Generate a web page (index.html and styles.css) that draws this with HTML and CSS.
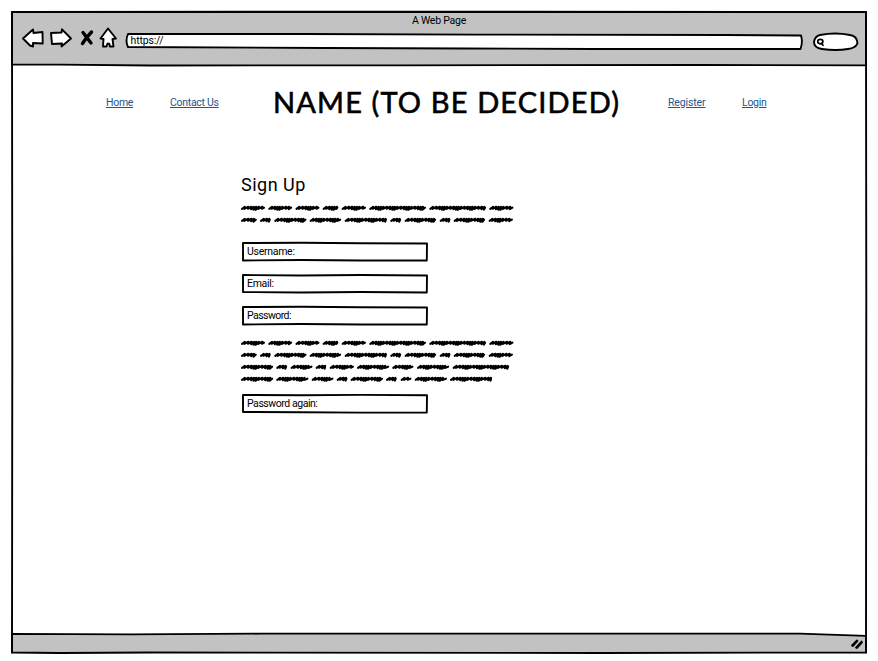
FILE: index.html
```html
<!DOCTYPE html>
<html lang="en">
<head>
<meta charset="utf-8">
<title>A Web Page</title>
<link rel="stylesheet" href="styles.css">
</head>
<body>
<div class="window">
  <svg class="outline" viewBox="0 0 878 661" aria-hidden="true">
    <path class="bar" d="M12 12H866V65.300L700 65L400 65.300L150 65.500L60 64.600L12 64.500Z"/>
    <path class="bar" d="M12 633.800L130 634.300L260 633.700H800L866 635.800V652.500L600 653L150 652.500L60 653L12 652.500Z"/>
    <path class="edge" d="M12 12L300 11.600L866 12L866.300 300L866 652.500M12 12L12.300 350L12 652.500"/>
  </svg>
  <header class="chrome">
    <div class="page-title"><span class="t-title">A Web Page</span></div>
    <div class="toolbar">
      <svg class="nav-icons" viewBox="0 0 100 28" aria-hidden="true">
        <path class="shape" d="M1 13.500L11 4.500L11.500 8L20.500 7L20.700 18.500L11 18L11 21.500L8 20.500Z"/>
        <path class="shape" d="M29 8L39.500 7.500L40 4.300L49 13.500L39.500 21.500L40 18.500L30 19Z"/>
        <path class="cross" d="M61 7.500L69 18M69.500 7L65 12L60.500 18.500"/>
        <path class="shape" d="M86 3.500L94 13.500L90.500 14L91.500 21.500H87.800L87.500 19L85.500 18.500L84.500 21.500L81 21.500L81.500 14L78.500 13.500Z"/>
      </svg>
      <div class="address">
        <svg class="backdrop" viewBox="0 0 678 18" aria-hidden="true"><path class="shape" d="M3 2L180 2L350 2.600L600 3L676 3.500Q678 10 675.500 17L470 17L340 16.500L200 16L3 15Q0 9 3 2Z"/></svg>
        <span class="t-url">https://</span>
      </div>
      <svg class="search" viewBox="0 0 46 20" aria-hidden="true"><path class="shape" d="M7 3Q22 0 37 3Q44 4 44.500 11Q43 16 35 17Q23 19 9 17Q1 16 1 10Q2 4 7 3Z"/><ellipse class="lens" cx="7.300" cy="9.600" rx="2.600" ry="2.200"/><path class="lens" d="M8.500 11.500L10 13.300"/></svg>
    </div>
  </header>
  <main class="content">
    <nav class="site-nav">
      <a class="home">Home</a>
      <a class="contact">Contact Us</a>
      <h1><span>NAME (TO BE DECIDED)</span></h1>
      <a class="register">Register</a>
      <a class="login">Login</a>
    </nav>
    <section class="signup">
      <h2>Sign Up</h2>
      <svg class="scribble" data-lines="2" width="276" height="24"></svg>
      <div class="fields">
        <div class="field"><svg class="backdrop" viewBox="0 0 188 21"><path class="box" d="M2 2L60 1.700L120 2.300L186 2.500L185.800 19.500L120 19.500L60 19L2 19.500Z"/></svg><span class="user">Username:</span></div>
        <div class="field"><svg class="backdrop" viewBox="0 0 188 21"><path class="box" d="M2 2L60 2.500L120 2L186 2.500L185.800 19.500L120 19L60 19.500L2 19Z"/></svg><span class="email">Email:</span></div>
        <div class="field"><svg class="backdrop" viewBox="0 0 188 21"><path class="box" d="M2 2L60 1.700L120 2.300L186 2.500L185.800 19.500L120 19.500L60 19L2 19.500Z"/></svg><span class="pass">Password:</span></div>
      </div>
      <svg class="scribble" data-lines="4" width="276" height="48"></svg>
      <div class="field again"><svg class="backdrop" viewBox="0 0 188 21"><path class="box" d="M2 2L60 2.200L120 1.900L186 2.200L185.800 19.500L120 19.600L60 19.300L2 19Z"/></svg><span class="repeat">Password again:</span></div>
    </section>
  </main>
  <footer class="status">
    <svg class="grip" viewBox="0 0 14 12" aria-hidden="true"><path d="M2 7.500L7 2.500M3 8L7.500 3M6 9.500L11.500 3.500M7 10L12 4.500"/></svg>
  </footer>
</div>
<script src="scribble.js"></script>
</body>
</html>
```
FILE: scribble.js
```js
// Placeholder prose: each pair is the start and end of one scribbled word.
const lines = [
  [[0,23.5],[27.3,50.7],[54.5,78],[81.7,97],[100.7,124.5],[128.3,184.5],[188.3,244.7],[248.3,272]],
  [[0,15.3],[19,29.3],[33.3,65],[68.7,99.7],[103.7,145.5],[149.3,159.7],[163.7,194.7],[198.7,209],[212.7,243.7],[247.7,271.5]],
  [[0,31.7],[35.3,45.7],[49.7,71],[74.7,84.7],[88.7,112.5],[116,147.7],[151.3,172],[176,207.7],[211.7,267.7]],
  [[0,31.7],[35.3,67],[70.7,92],[95.7,106],[109.7,141.5],[145,155.3],[159.7,170],[173.7,205.5],[209,250.7]]
];
document.querySelectorAll('.scribble').forEach(svg => {
  lines.slice(0, +svg.dataset.lines).forEach((words, row) => {
    const y = 5 + row * 12;
    let d = '';
    words.forEach(([a, b], w) => {
      d += `M${a + 1} ${y + 0.8}`;
      let x = a + 1, i = 0;
      while (x + 3.2 < b) {
        const low = [0.9, 0.7, 1.2, 1.7, 1.8][(i + w % 2) % 5];
        d += `L${x + 2.8} ${y - 1.2}L${x + 2.3} ${y + low}`;
        x += [3.6, 3.2, 2.4, 2.2, 2.6][(i + w % 2) % 5];
        i++;
      }
      d += `L${b - 0.6} ${y - 0.3}`;
    });
    const path = document.createElementNS('http://www.w3.org/2000/svg', 'path');
    path.setAttribute('d', d);
    svg.append(path);
  });
});
```
FILE: styles.css
```css
* { box-sizing: border-box; }
body { margin: 0; background: #fff; color: #000; font-family: Roboto, "Noto Sans", sans-serif; font-size: 10.5px; letter-spacing: -.28px; overflow: hidden; }
svg { display: block; overflow: visible; }
.window { position: relative; isolation: isolate; width: 878px; height: 661px; padding: 12px 12px 8px; display: grid; grid-template-rows: 53px 1fr 19px; }
.outline { position: absolute; inset: 0; width: 878px; height: 661px; z-index: -1; }
.bar { fill: #c2c2c2; stroke: #000; stroke-width: 1.8; stroke-linejoin: round; }
.edge { fill: none; stroke: #000; stroke-width: 1.9; stroke-linecap: round; }
.shape { fill: #fff; stroke: #000; stroke-width: 1.9; stroke-linejoin: round; }
.cross { fill: none; stroke: #000; stroke-width: 3.4; stroke-linecap: round; }
.page-title { height: 16px; padding-top: 2px; line-height: 13px; text-align: center; }
.t-title { letter-spacing: -.22px; }
.toolbar { display: flex; padding-left: 10px; height: 28px; margin-top: -3px; }
.nav-icons { width: 100px; height: 28px; flex: none; }
.address { position: relative; width: 678px; height: 18px; margin: 7px 10px 0 3px; padding-left: 5.5px; line-height: 17px; letter-spacing: -.15px; }
.backdrop { position: absolute; inset: 0; width: 100%; height: 100%; z-index: -1; }
.search { width: 46px; height: 20px; margin-top: 7px; flex: none; }
.lens { fill: none; stroke: #000; stroke-width: 1.7; stroke-linecap: round; }
.site-nav { display: grid; grid-template-columns: 64px 104px 394px 74px 1fr; align-items: center; height: 74px; padding-left: 94px; }
.site-nav a { color: #27548b; text-decoration: underline; text-underline-offset: 1px; text-decoration-thickness: 1px; white-space: nowrap; justify-self: start; }
.site-nav .register { letter-spacing: -.12px; }
h1 { margin: 0 0 0 -1px; font-family: Lato, sans-serif; font-weight: 400; font-size: 29px; line-height: 40px; letter-spacing: 1.15px; white-space: nowrap; -webkit-text-stroke: .6px #000; }
.signup { width: 280px; margin: 35px 0 0 229px; }
h2 { margin: 0 0 7px; font-weight: 400; font-size: 18px; line-height: 22px; letter-spacing: .5px; white-space: nowrap; }
.scribble path { fill: none; stroke: #000; stroke-width: 2.1; stroke-linejoin: round; stroke-linecap: round; }
.fields { display: grid; gap: 11px; margin: 14px 0 12px; }
.field { position: relative; width: 188px; height: 21px; padding-left: 6px; line-height: 22px; white-space: nowrap; }
.field .pass { letter-spacing: -.55px; }
.field .repeat { letter-spacing: -.45px; }
.again { margin-top: 7px; }
.box { fill: #fff; stroke: #000; stroke-width: 1.9; stroke-linejoin: round; }
.status { display: flex; justify-content: flex-end; align-items: center; }
.grip { width: 14px; height: 12px; margin-right: 2px; }
.grip path { fill: none; stroke: #000; stroke-width: 1.8; stroke-linecap: round; }
```
